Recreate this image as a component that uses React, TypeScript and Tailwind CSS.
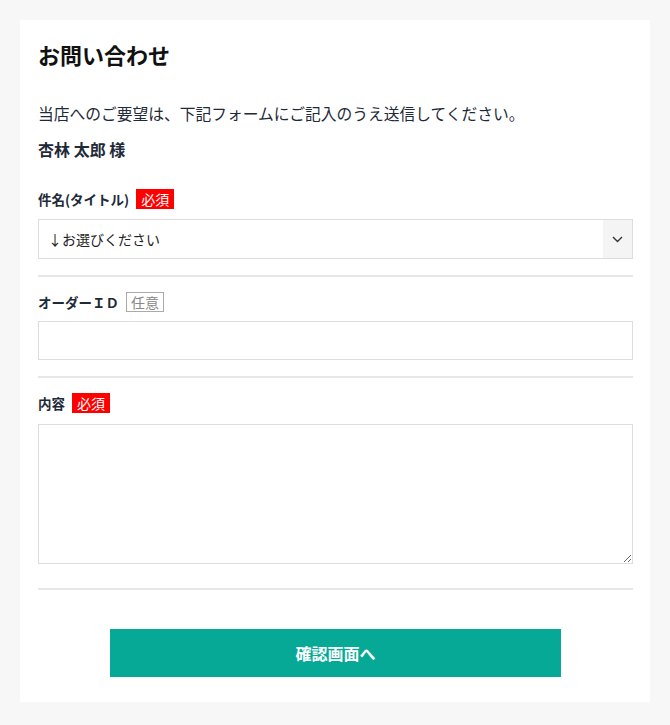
import React from "react";

const font = { fontFamily: '"Noto Sans CJK JP", "Noto Sans", sans-serif' };

function Required() {
  return (
    <span className="inline-flex h-[20px] items-center bg-[#ff0000] px-[5px] text-[14px] leading-none text-white">
      必須
    </span>
  );
}

function Optional() {
  return (
    <span className="inline-flex h-[20px] items-center border border-[#aaaaaa] px-[4px] text-[14px] leading-none text-[#888888]">
      任意
    </span>
  );
}

export default function App() {
  return (
    <div className="min-h-[725px] bg-[#f7f7f7] pt-[20px] pb-[23px]" style={font}>
      <div className="mx-[20px] bg-white pl-[18px] pr-[17px] pt-[18px] pb-[25px] text-[#1e2a38]">
        <h1 className="text-[22px] font-bold leading-[32px] text-[#111111]">お問い合わせ</h1>
        <p className="mt-[32px] text-[15.75px] leading-[24px]">
          当店へのご要望は、下記フォームにご記入のうえ送信してください。
        </p>
        <p className="mt-[11px] text-[16px] font-bold leading-[24px]">杏林 太郎 様</p>

        <div className="mt-[28px] flex h-[20px] items-center gap-[7px]">
          <span className="text-[13.5px] font-bold">件名(タイトル)</span>
          <Required />
        </div>
        <div className="mt-[10px] flex h-[40px] border border-[#dddddd]">
          <div className="flex flex-1 items-center pl-[9px] text-[14px] text-[#222222]">↓お選びください</div>
          <div className="flex w-[29px] items-center justify-center bg-[#f4f4f4]">
            <svg width="11" height="7" viewBox="0 0 11 7" fill="none">
              <path d="M1 1l4.5 4.5L10 1" stroke="#333" strokeWidth="1.4" />
            </svg>
          </div>
        </div>
        <div className="mt-[16px] border-t-[2px] border-[#e6e6e6]" />

        <div className="mt-[15px] flex h-[20px] items-center gap-[7px]">
          <span className="text-[13.5px] font-bold">オーダーＩＤ</span>
          <Optional />
        </div>
        <input className="mt-[9px] block h-[39px] w-full border border-[#dddddd] outline-none" />
        <div className="mt-[16px] border-t-[2px] border-[#e6e6e6]" />

        <div className="mt-[15px] flex h-[20px] items-center gap-[7px]">
          <span className="text-[13.5px] font-bold">内容</span>
          <Required />
        </div>
        <textarea className="mt-[11px] block h-[140px] w-full border border-[#dddddd] outline-none" />
        <div className="mt-[24px] border-t-[2px] border-[#e6e6e6]" />

        <div className="mt-[39px] flex justify-center">
          <button className="h-[48px] w-[451px] bg-[#06a896] text-[16px] font-bold text-white">確認画面へ</button>
        </div>
      </div>
    </div>
  );
}
